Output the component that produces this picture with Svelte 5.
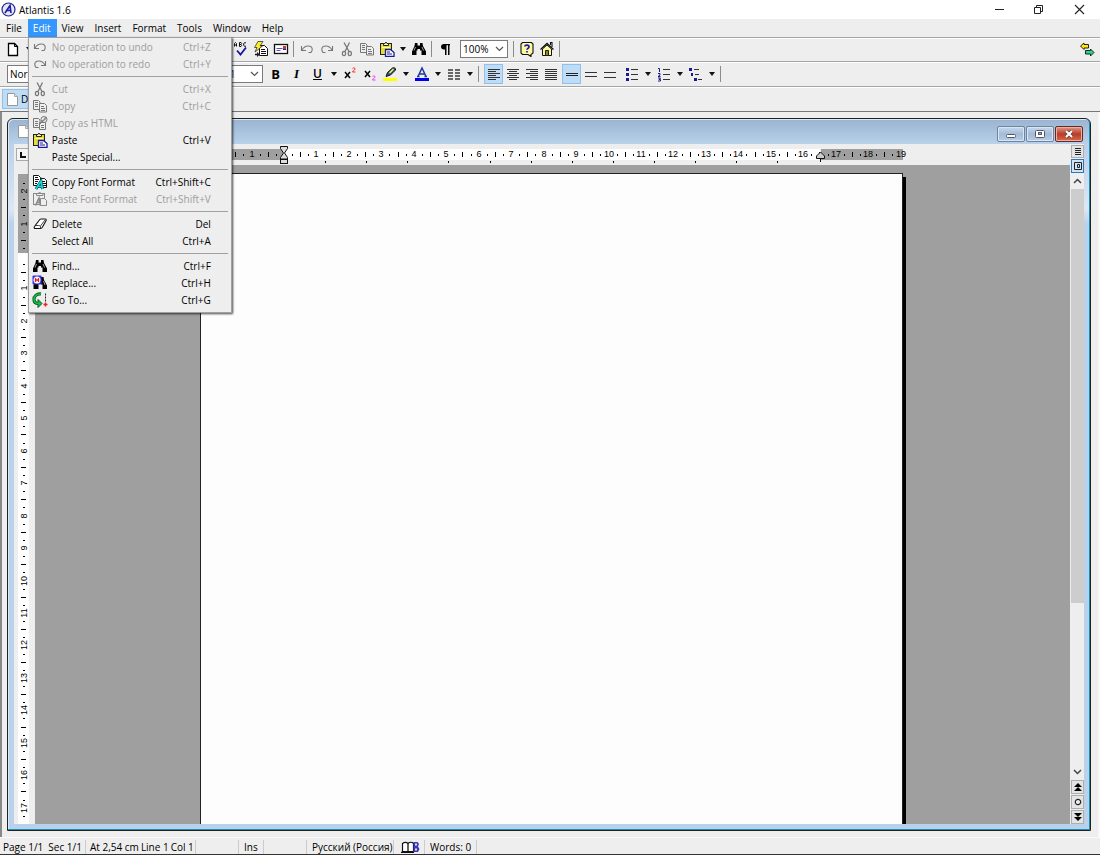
<script lang="ts">
  type MenuEntry = {
    label: string;
    keys?: string;
    icon?: string;
    disabled?: boolean;
  };

  const menus = ["File", "Edit", "View", "Insert", "Format", "Tools", "Window", "Help"];

  const editMenu: MenuEntry[][] = [
    [
      { label: "No operation to undo", keys: "Ctrl+Z", icon: "undo", disabled: true },
      { label: "No operation to redo", keys: "Ctrl+Y", icon: "redo", disabled: true },
    ],
    [
      { label: "Cut", keys: "Ctrl+X", icon: "cut", disabled: true },
      { label: "Copy", keys: "Ctrl+C", icon: "copy", disabled: true },
      { label: "Copy as HTML", icon: "copyHtml", disabled: true },
      { label: "Paste", keys: "Ctrl+V", icon: "paste" },
      { label: "Paste Special..." },
    ],
    [
      { label: "Copy Font Format", keys: "Ctrl+Shift+C", icon: "copyFormat" },
      { label: "Paste Font Format", keys: "Ctrl+Shift+V", icon: "pasteFormat", disabled: true },
    ],
    [
      { label: "Delete", keys: "Del", icon: "eraser" },
      { label: "Select All", keys: "Ctrl+A" },
    ],
    [
      { label: "Find...", keys: "Ctrl+F", icon: "find" },
      { label: "Replace...", keys: "Ctrl+H", icon: "replace" },
      { label: "Go To...", keys: "Ctrl+G", icon: "goto" },
    ],
  ];

  let openMenu = $state("Edit");
  let align = $state("alignLeft");
  let spacing = $state("spaceSingle");
  let canvasHeight = $state(600);

  const CM = 32.45;

  // quarter-centimetre marks between two positions, zero sits at `origin`
  function marks(from: number, to: number, origin: number) {
    const out: { pos: number; kind: string; label: string }[] = [];
    const first = Math.ceil(((from - origin) / CM) * 4);
    const last = Math.floor(((to - origin) / CM) * 4);
    for (let i = first; i <= last; i++) {
      if (i === 0) continue;
      const kind = i % 4 === 0 ? "number" : i % 2 === 0 ? "bar" : "dot";
      out.push({
        pos: Math.round(origin + (i * CM) / 4),
        kind,
        label: String(Math.abs(i / 4)),
      });
    }
    return out;
  }

  const hMarks = marks(4, 702, 83);
  const vMarks = $derived(marks(14, canvasHeight - 7, 91));
  const tabStops = Array.from({ length: 12 }, (_, i) => Math.round(83 + (i + 1) * 41.1));
</script>

{#snippet icon(name: string)}
  <svg class="icon" width="16" height="16" viewBox="0 0 16 16" fill="none" aria-hidden="true">
    {#if name === "new"}
      <path d="M3.5 2.5h6l3 3v9h-9z" fill="#fff" stroke="#000" stroke-width="1.3" />
      <path d="M9.5 2.5v3h3" stroke="#000" />
    {:else if name === "spell"}
      <path
        d="M1.500 5.500v-3l1-1 1 1v3M1.500 4h2M6.500 1.500v4H8l.7-1L8 3.500H6.500 8l.7-1-.7-1zM13 2l-1-.5-1.300 1v2l1.300 1 1-.5"
        stroke="#111"
      />
      <path d="M4 9.500l3.500 4L13 6.500" stroke="#15159c" stroke-width="1.800" />
    {:else if name === "autocorrect"}
      <path d="M6.500 4.500h5l3 3v7h-8z" fill="#fff" stroke="#111" />
      <path d="M8 8.500h4M8 10.500h5M8 12.500h5" stroke="#111" />
      <path d="M5 .5h5L7 5h2.500L2 11l2-4.500H1.500z" fill="#ffee2a" stroke="#333" stroke-width=".8" />
      <path d="M2 13.500h3" stroke="#111" stroke-width="1.500" />
      <path d="M4 11l3 2.500L4 16z" fill="#222" />
    {:else if name === "mail"}
      <rect x="1.500" y="3.500" width="13" height="9" fill="#fff" stroke="#111" stroke-width="1.300" />
      <path d="M3.500 7.500h6M3.500 9.500h4" stroke="#5555c0" />
      <rect x="10" y="5" width="3" height="3" fill="#c33" />
      <path d="M10 8.500h3" stroke="#1a1ad0" />
    {:else if name === "undo"}
      <path d="M2.500 5v4.500H7M3 9c2-3.500 5-4.500 8-3.800 2.500.7 3 3.500 1 6.300H9.500" stroke="#777" stroke-width="1.100" />
    {:else if name === "redo"}
      <path d="M13.500 5v4.500H9M13 9c-2-3.500-5-4.500-8-3.800-2.500.7-3 3.500-1 6.300h2.500" stroke="#777" stroke-width="1.100" />
    {:else if name === "cut"}
      <path d="M5 1.500l5 9M10.500 1.500l-4.500 9" stroke="#777" stroke-width="1.300" />
      <ellipse cx="5" cy="12.500" rx="1.600" ry="2.200" stroke="#777" stroke-width="1.200" />
      <ellipse cx="10.800" cy="12.500" rx="1.600" ry="2.200" stroke="#777" stroke-width="1.200" />
    {:else if name === "copy"}
      <g stroke="#777">
        <path d="M1.500 2.500h5l1.500 1.500v7.500H1.500z" />
        <path d="M3 4.500h3M3 6.500h3M3 8.500h3" />
        <path d="M7.500 5.500h5l2 2v6.500h-7z" fill="#eee" />
        <path d="M9 8.500h3M9 10.500h4M9 12.500h4" />
      </g>
    {:else if name === "copyHtml"}
      <g stroke="#777">
        <path d="M1.500 3.500h5l1.500 1.500v7.500H1.500z" />
        <path d="M3 6.500h3M3 8.500h3M3 10.500h3" />
        <path d="M7.500 7.500h6v7h-6z" fill="#eee" />
        <path d="M9 10.500h3M9 12.500h3" />
        <circle cx="12" cy="4.500" r="3" fill="#eee" />
        <path d="M10 6c2 0 4-1.500 4-4M8 9l6-7" />
      </g>
    {:else if name === "paste"}
      <rect x="1.500" y="2.500" width="11" height="11" fill="#e5dd35" stroke="#222" />
      <path d="M4.500 4.500v-2h1.500l1-1.500 1 1.500h1.500v2z" fill="#fdfbb0" stroke="#222" />
      <path d="M3 6.500h8" stroke="#fdfbb0" />
      <path d="M6.500 8.500h5l3.500 3v4H6.500z" fill="#fff" stroke="#1a1a9a" stroke-width="1.300" />
      <path d="M8 11h3M8 13h5" stroke="#1a1a9a" />
    {:else if name === "copyFormat"}
      <g stroke="#111">
        <path d="M1.500 1.500h5l2 2v8h-7z" fill="#fff" />
        <path d="M3 3.500h3M3 5.500h4M3 7.500h3M3 9.500h2" />
        <path d="M8.500 4.500h4l2 2v7h-6z" fill="#fff" />
        <path d="M10 7.500h3M10 9.500h4M11 11.500h3" />
      </g>
      <path d="M4 15L9 7l1.500 8M6.500 12.500h4" stroke="#044" stroke-width="2.800" />
      <path d="M4 15L9 7l1.500 8M6.500 12.500h4" stroke="#19d6dc" stroke-width="1.600" />
    {:else if name === "pasteFormat"}
      <g stroke="#888">
        <rect x="1.500" y="2.500" width="11" height="11" />
        <path d="M4.500 4.500v-2h2l1-1.500 1.500 1.500h2v2z" />
        <path d="M8.500 7.500h4l2 2v5h-6z" fill="#eee" />
        <path d="M3.500 14.500L7 7l1.500 7.500M5 11.500h4" stroke-width="1.500" />
      </g>
    {:else if name === "eraser"}
      <path
        d="M7 4.500c.6-1 1-1.500 2-1.500h4c1.200 0 1.500.8 1 1.800L10.500 11c-.5.9-1 1.500-2 1.500H3.500c-1.200 0-1.800-1-1-2z"
        fill="#fff"
        stroke="#111"
        stroke-width="1.100"
      />
      <path d="M3.500 9.500h3.200c1.500 0 2 .8 1.800 2.500M8.500 10l4.500-6" stroke="#111" stroke-width=".8" />
    {:else if name === "find"}
      <path d="M4 2h2.500v2.500H9V2h2.500l.5 3 3 5.500V14h-4.500v-4.500H9V8H6.500v1.500H5.500V14H1v-3.500L3.500 5z" fill="#000" />
      <path d="M4.500 6L3 9.500M11 6l1.500 3.500" stroke="#ccc" stroke-width=".8" />
    {:else if name === "replace"}
      <path d="M5 2h2.500v2.500H9V2h2.500l.5 3 3 5.500V14h-4.500v-4.500H9V8H6.500v6H1.500v-4z" fill="#000" />
      <rect x=".5" y=".5" width="9" height="9" rx="1" fill="#3434e0" />
      <circle cx="5" cy="5" r="3.500" fill="#fff" />
      <path d="M3.500 3v4M6.500 3v4M3.500 5h3" stroke="#e02020" stroke-width="1.300" />
      <path d="M11.500 6l1.500 4" stroke="#ccc" stroke-width=".8" />
    {:else if name === "goto"}
      <path
        d="M9 2C4.500 1.500 2 4.500 2 7.200c0 2.800 1.500 4.300 4.500 4.300"
        stroke="#053"
        stroke-width="3.200"
      />
      <path d="M6 7.500l4 4-4 4z" fill="#1dbf38" stroke="#053" />
      <path d="M9 2C4.500 1.500 2 4.500 2 7.200c0 2.800 1.500 4.300 5 4.300" stroke="#1dbf38" stroke-width="1.600" />
      <path d="M13.500 1.500v8" stroke="#222" stroke-dasharray="2 1" />
      <path d="M11.500 12.500h4M13.500 10.500v4" stroke="#e22" stroke-width="1.500" />
    {:else if name === "pilcrow"}
      <path d="M13 3H7C3 3 3 8.500 7 8.500h1V14h1.500V4.300H11V14h1.500V4.300h.5z" fill="#000" />
    {:else if name === "help"}
      <path d="M3.500 1.500h9l1.500 1.500v9l-2 1.500V15.500l-3-2H3.500L2 12V3z" fill="#fdf9a0" stroke="#111" stroke-width="1.100" />
      <path d="M5.800 5.500C6 3.500 10 3.500 10 5.800c0 1.500-2 1.600-2 3M8 10v1.500" stroke="#1a1aa8" stroke-width="1.700" />
    {:else if name === "home"}
      <path d="M11.500 4V1.500H13V6" stroke="#111" stroke-width="1.100" />
      <path d="M3.500 8L8 4l4.500 4v6.500h-9z" fill="#fdf9a0" stroke="#111" />
      <path d="M1.500 8.500L8 2.500l6.500 6" stroke="#111" stroke-width="1.300" />
      <path d="M6.500 14.500v-5h3v5z" fill="#8d8a1e" stroke="#222" />
    {:else if name === "swap"}
      <path d="M1.500 5L5 2v1.500h4.500V7H5v1.500z" fill="#ffea00" stroke="#222" />
      <path d="M15 11.500L11.500 8v1.500H6.500V13h5v2z" fill="#1fdc8c" stroke="#222" />
    {:else if name === "super"}
      <path d="M3 6l5 6M8 6l-5 6" stroke="#000" stroke-width="1.500" />
      <path d="M10.500 2.500c1-1 2.500-1 2.500.5s-2.500 1.500-2.500 3h3" stroke="#f33" />
    {:else if name === "sub"}
      <path d="M3 5l5 6M8 5l-5 6" stroke="#000" stroke-width="1.500" />
      <path d="M10.500 10.500c1-1 2.500-1 2.500.5s-2.500 1.500-2.500 3h3" stroke="#f3f" />
    {:else if name === "highlight"}
      <rect x="1" y="12" width="14" height="3" fill="#ffff00" />
      <path d="M4 10.500l1.500-4 5-4.500c2-.8 3.500.5 3 2L8.500 9z" fill="#335a77" stroke="#111" />
      <path d="M7.500 7l4-4" stroke="#ffff50" stroke-width="1.300" />
    {:else if name === "fontColor"}
      <rect x="1" y="12" width="14" height="3" fill="#0000f0" />
      <path d="M4 10.500L8 2l4 8.500M5.500 8h5M3 10.500h2.500M10.500 10.500H13" stroke="#1c3a9c" stroke-width="1.500" />
    {:else if name === "columns"}
      <path
        d="M2 4h5M2 7h5M2 10h5M2 13h5M9 4h5M9 7h5M9 10h5M9 13h5"
        stroke="#666"
        stroke-width="2"
      />
    {:else if name === "alignLeft"}
      <path d="M2 3.500h12M2 5.500h8M2 7.500h12M2 9.500h8M2 11.500h12M2 13.500h8" stroke="#333" />
    {:else if name === "alignCenter"}
      <path d="M2 3.500h12M4 5.500h8M2 7.500h12M4 9.500h8M2 11.500h12M4 13.500h8" stroke="#333" />
    {:else if name === "alignRight"}
      <path d="M2 3.500h12M6 5.500h8M2 7.500h12M6 9.500h8M2 11.500h12M6 13.500h8" stroke="#333" />
    {:else if name === "justify"}
      <path d="M2 3.500h12M2 5.500h12M2 7.500h12M2 9.500h12M2 11.500h12M2 13.500h12" stroke="#333" />
    {:else if name === "spaceSingle"}
      <path d="M2 7.500h12M2 9.500h12" stroke="#222" />
    {:else if name === "spaceHalf"}
      <path d="M2 6.500h12M2 10.500h12" stroke="#333" />
    {:else if name === "spaceDouble"}
      <path d="M2 6.500h12M2 11.500h12" stroke="#333" />
    {:else if name === "bullets"}
      <path d="M2 2h3v3H2zM2 7h3v3H2zM2 12h3v3H2z" fill="#1a1a90" />
      <path d="M7 3.500h7M7 8.500h7M7 13.500h7" stroke="#333" />
    {:else if name === "numbers"}
      <path d="M2 2.500h1.500V6M2 7.500h2v1.500l-2 1.500h2.500M2 12h2.500L3 13.500h1.500v1.500H2" stroke="#1a1a90" />
      <path d="M7 3.500h7M7 8.500h7M7 13.500h7" stroke="#333" />
    {:else if name === "outline"}
      <path d="M1 2h3v3H1zM3 7h2v3H3zM6 12h3v3H6z" fill="#1a1a90" />
      <path d="M6 3.500h5M7 8.500h4M10 13.500h4" stroke="#333" />
    {/if}
  </svg>
{/snippet}

{#snippet tool(name: string, label: string, disabled = false)}
  <button class="tool" title={label} aria-label={label} {disabled}>{@render icon(name)}</button>
{/snippet}

{#snippet drop(label: string)}
  <button class="drop" aria-label={label}>
    <svg width="6" height="4" viewBox="0 0 6 4"><path d="M0 0h6L3 4z" fill="#111" /></svg>
  </button>
{/snippet}

{#snippet chevron()}
  <svg class="chevron" width="9" height="6" viewBox="0 0 9 6" fill="none">
    <path d="M1 1l3.500 3.500L8 1" stroke="#555" stroke-width="1.200" />
  </svg>
{/snippet}

{#snippet sheet()}
  <svg width="11" height="13" viewBox="0 0 11 13">
    <path d="M.5.5h7l3 3v9H.5z" fill="#fff" stroke="#999" />
    <path d="M7.500.5v3h3" fill="#ddd" stroke="#aaa" />
  </svg>
{/snippet}

<div class="app">
  <header class="titlebar">
    <svg width="15" height="15" viewBox="0 0 15 15">
      <circle cx="7.500" cy="7.500" r="6.500" fill="#e4e6fa" stroke="#23238c" stroke-width="1.200" />
      <path d="M4 11L9 3.500l1 7.500M6 8.500h4" fill="none" stroke="#1c1ca0" stroke-width="1.600" />
    </svg>
    <h1>Atlantis 1.6</h1>
    <div class="caption">
      <button aria-label="Minimize">
        <svg width="11" height="11"><path d="M1 5.500h9" stroke="#222" /></svg>
      </button>
      <button aria-label="Restore">
        <svg width="11" height="11" fill="none" stroke="#222">
          <path d="M1.500 3.500h6v6h-6zM3.500 3.500v-2h6v6h-2" />
        </svg>
      </button>
      <button aria-label="Close">
        <svg width="11" height="11"><path d="M1 1l9 9M10 1l-9 9" stroke="#222" stroke-width="1.100" /></svg>
      </button>
    </div>
  </header>

  <nav class="menubar">
    {#each menus as name}
      <div class="menu-slot">
        <button
          class="menu-title"
          class:open={openMenu === name}
          onclick={() => (openMenu = openMenu === name ? "" : name)}>{name}</button
        >
        {#if name === "Edit" && openMenu === name}
          <div class="menu" role="menu">
            {#each editMenu as section}
              <div class="menu-section">
                {#each section as entry}
                  <button class="menu-item" role="menuitem" disabled={entry.disabled}>
                    <span class="menu-icon">
                      {#if entry.icon}{@render icon(entry.icon)}{/if}
                    </span>
                    <span class="menu-label">{entry.label}</span>
                    <span>{entry.keys ?? ""}</span>
                  </button>
                {/each}
              </div>
            {/each}
          </div>
        {/if}
      </div>
    {/each}
  </nav>

  <div class="toolbar standard">
    {@render tool("new", "New")}
    {@render drop("New from template")}
    <div class="tools">
      {@render tool("spell", "Spelling")}
      {@render tool("autocorrect", "AutoCorrect")}
      {@render tool("mail", "Send")}
      <i class="sep"></i>
      {@render tool("undo", "Undo", true)}
      {@render tool("redo", "Redo", true)}
      {@render tool("cut", "Cut", true)}
      {@render tool("copy", "Copy", true)}
      {@render tool("paste", "Paste")}
      {@render drop("Paste options")}
      {@render tool("find", "Find")}
      <i class="sep"></i>
      {@render tool("pilcrow", "Special symbols")}
      <span class="combo zoom">
        <select aria-label="Zoom"><option>100%</option></select>
        {@render chevron()}
      </span>
      <i class="sep"></i>
      {@render tool("help", "Help")}
      {@render tool("home", "Home page")}
      <i class="sep"></i>
    </div>
    <div class="far">{@render tool("swap", "Switch toolbars")}</div>
  </div>

  <div class="toolbar formatting">
    <span class="combo style">
      <select aria-label="Style"><option>Normal</option></select>
      {@render chevron()}
    </span>
    <span class="combo size">
      <select aria-label="Font size"><option>11</option></select>
      {@render chevron()}
    </span>
    <button class="tool letter">B</button>
    <button class="tool letter italic">I</button>
    <button class="tool letter underline">U</button>
    {@render drop("Underline style")}
    {@render tool("super", "Superscript")}
    {@render tool("sub", "Subscript")}
    {@render tool("highlight", "Highlight")}
    {@render drop("Highlight color")}
    {@render tool("fontColor", "Font color")}
    {@render drop("Pick font color")}
    {@render tool("columns", "Columns")}
    {@render drop("Column count")}
    <i class="sep"></i>
    <div class="group">
      {#each ["alignLeft", "alignCenter", "alignRight", "justify"] as name}
        <button class="tool" class:on={align === name} aria-label={name} onclick={() => (align = name)}>
          {@render icon(name)}
        </button>
      {/each}
    </div>
    <div class="group">
      {#each ["spaceSingle", "spaceHalf", "spaceDouble"] as name}
        <button class="tool" class:on={spacing === name} aria-label={name} onclick={() => (spacing = name)}>
          {@render icon(name)}
        </button>
      {/each}
    </div>
    <div class="lists">
      {@render tool("bullets", "Bullets")}
      {@render drop("Bullet style")}
      {@render tool("numbers", "Numbering")}
      {@render drop("Numbering style")}
      {@render tool("outline", "Outline")}
      {@render drop("Outline style")}
    </div>
    <i class="sep"></i>
  </div>

  <div class="doc-tabs">
    <button class="doc-tab">{@render sheet()}Doc 1</button>
  </div>

  <main class="workspace">
    <section class="window">
      <div class="window-title">
        {@render sheet()}
        <div class="window-buttons">
          <button aria-label="Minimize document">
            <svg width="12" height="10">
              <rect x="1.500" y="5.500" width="9" height="3" rx="1" fill="#fff" stroke="#556" />
            </svg>
          </button>
          <button aria-label="Maximize document">
            <svg width="12" height="10" fill="#fff" stroke="#556">
              <rect x="1.500" y="1.500" width="9" height="7" rx="1" />
              <rect x="4.500" y="3.500" width="3" height="2" fill="#9bb" />
            </svg>
          </button>
          <button class="close" aria-label="Close document">
            <svg width="12" height="10">
              <path d="M3 2l6 6M9 2L3 8" stroke="#643" stroke-width="3.500" />
              <path d="M3 2l6 6M9 2L3 8" stroke="#fff" stroke-width="2" />
            </svg>
          </button>
        </div>
      </div>

      <div class="editor">
        <div class="ruler-row">
          <button class="tab-kind" aria-label="Tab type">
            <svg width="7" height="6"><path d="M1 0v5h5" fill="none" stroke="#111" stroke-width="2" /></svg>
          </button>
          <svg class="h-ruler" width="708" height="21">
            <rect x="0" y="5" width="83" height="11" fill="#9f9f9f" />
            <rect x="83" y="5" width="536" height="11" fill="#fff" />
            <rect x="620" y="5" width="82" height="11" fill="#9f9f9f" />
            {#each hMarks as mark}
              {#if mark.kind === "number"}
                <text x={mark.pos} y="13">{mark.label}</text>
              {:else if mark.kind === "bar"}
                <rect x={mark.pos} y="8" width="1" height="5" />
              {:else}
                <rect x={mark.pos} y="10" width="1" height="2" />
              {/if}
            {/each}
            {#each tabStops as stop}
              <rect x={stop} y="17" width="1" height="2" />
            {/each}
            <g fill="#ddd" stroke="#111">
              <path d="M79.500 2.500h7v2l-3 4.500 3 4.500v1.500h-7v-1.500l3-4.500-3-4.500z" />
              <rect x="79.500" y="15.500" width="7" height="4" />
              <path d="M615.500 14.500v-2.500l4-4 4 4v2.500z" fill="#ccc" />
              <path d="M619.500 15v3" />
            </g>
          </svg>
          <button class="view-button" aria-label="Draft view">
            <svg width="8" height="9">
              <path d="M1 1.500h6M1 3.500h6M1 5.500h6M1 7.500h6" stroke="#222" />
            </svg>
          </button>
        </div>

        <svg class="v-ruler" width="21">
          <rect x="4" y="9" width="11" height="79" fill="#9f9f9f" />
          <rect x="4" y="88" width="11" height="100%" fill="#fff" />
          {#each vMarks as mark}
            {#if mark.kind === "number"}
              <text transform="translate(13 {mark.pos}) rotate(-90)">{mark.label}</text>
            {:else if mark.kind === "bar"}
              <rect x="7" y={mark.pos} width="5" height="1" />
            {:else}
              <rect x="9" y={mark.pos} width="2" height="1" />
            {/if}
          {/each}
        </svg>

        <div class="canvas" bind:clientHeight={canvasHeight}>
          <div class="page" contenteditable="true" role="textbox" aria-label="Page" tabindex="0"></div>
        </div>

        <div class="scroll">
          <button class="view-button on" aria-label="Print layout">
            <svg width="8" height="8" fill="none" stroke="#222">
              <path d="M.5.500h7v7h-7zM3.500 2.500h2v3h-2z" />
            </svg>
          </button>
          <button class="arrow" aria-label="Scroll up">
            <svg width="9" height="6"><path d="M1 5l3.500-3.500L8 5" fill="none" stroke="#444" stroke-width="1.500" /></svg>
          </button>
          <div class="track"><div class="thumb"></div></div>
          <button class="arrow" aria-label="Scroll down">
            <svg width="9" height="6"><path d="M1 1l3.500 3.500L8 1" fill="none" stroke="#444" stroke-width="1.500" /></svg>
          </button>
          <button class="jump" aria-label="Previous page">
            <svg width="8" height="8"><path d="M4 0l4 4H0zM4 4l4 4H0z" /></svg>
          </button>
          <button class="jump" aria-label="Browse by">
            <svg width="8" height="8"><circle cx="4" cy="4" r="2.700" fill="#eee" stroke="#222" stroke-width="1.200" /></svg>
          </button>
          <button class="jump" aria-label="Next page">
            <svg width="8" height="8"><path d="M0 0h8L4 4zM0 4h8L4 8z" /></svg>
          </button>
        </div>
      </div>
    </section>
  </main>

  <footer class="status">
    <span class="cell place"><span>Page 1/1</span><span>Sec 1/1</span></span>
    <span class="cell caret"><span>At 2,54 cm</span><span>Line 1</span><span>Col 1</span></span>
    <span class="cell blank"></span>
    <span class="cell mode">Ins</span>
    <span class="cell blank"></span>
    <span class="cell language">Русский (Россия)</span>
    <span class="cell book">
      <svg width="19" height="12" viewBox="0 0 19 12">
        <path
          d="M1.500 2.500c2-1.500 4-1.500 5.500 0 1.500-1.500 4-1.500 5.500 0v8h-11z"
          fill="#fff"
          stroke="#111"
          stroke-width="1.200"
        />
        <path d="M7 2.500v8M0 11.300h13" stroke="#111" stroke-width="1.300" />
        <path d="M12.500 1h4L18 3l-1 2.500L18.500 8 17 11h-4.500z" fill="#3434d8" />
        <path d="M14 2.500h2v2h-2zM14 7.500h2v2h-2z" fill="#ffe94a" />
      </svg>
    </span>
    <span class="cell words">Words: 0</span>
  </footer>
</div>

<style>
  :global(body) {
    margin: 0;
    background: #eee;
  }

  .app {
    display: flex;
    flex-direction: column;
    height: 100vh;
    box-sizing: border-box;
    border-bottom: 1px solid #333;
    background: #eee;
    color: #000;
    font: 10px/16px "Open Sans", "Noto Sans", sans-serif;
  }

  button,
  select {
    font: inherit;
    color: inherit;
    margin: 0;
    padding: 0;
    border: none;
    background: none;
  }

  svg {
    display: block;
    flex-shrink: 0;
  }

  .titlebar {
    display: flex;
    align-items: center;
    gap: 3px;
    height: 19px;
    padding-left: 1px;
    background: #fff;
  }

  h1 {
    margin: 0;
    font-size: 10px;
    font-weight: 400;
  }

  .caption {
    display: flex;
    margin-left: auto;
  }

  .caption button {
    display: flex;
    align-items: center;
    justify-content: center;
    width: 39px;
    height: 18px;
  }

  .caption button:last-child {
    width: 42px;
  }

  .menubar {
    display: flex;
    height: 18px;
    padding-left: 1px;
    border-bottom: 1px solid #a5a5a5;
  }

  .menu-slot {
    position: relative;
  }

  .menu-title {
    height: 18px;
    padding: 0 6px 0 5px;
  }

  .menu-title.open {
    background: #3397fd;
    color: #fff;
  }

  .menu {
    position: absolute;
    z-index: 2;
    top: 18px;
    left: 0;
    width: 204px;
    padding: 0 3px 4px;
    border: 1px solid #a0a0a0;
    background: #eee;
    box-shadow: 1px 1px 2px rgba(0, 0, 0, 0.7);
    box-sizing: border-box;
  }

  .menu-section + .menu-section {
    margin-top: 4px;
    padding-top: 3px;
    border-top: 1px solid #a0a0a0;
  }

  .menu-item {
    display: flex;
    align-items: center;
    width: 100%;
    height: 17px;
    padding-right: 17px;
    text-align: left;
    white-space: nowrap;
  }

  .menu-item:disabled {
    color: #9d9d9d;
  }

  .menu-icon {
    width: 20px;
  }

  .menu-label {
    flex: 1;
  }

  .toolbar {
    display: flex;
    align-items: center;
    height: 24px;
    padding-bottom: 2px;
    box-sizing: border-box;
    border-top: 1px solid #fff;
    border-bottom: 1px solid #a5a5a5;
  }

  .standard {
    padding-left: 3px;
    padding-right: 3px;
  }

  .formatting {
    height: 25px;
    padding-left: 7px;
  }

  .tools {
    display: flex;
    align-items: center;
    margin-left: 196px;
  }

  .far {
    margin-left: auto;
  }

  .tool,
  .drop {
    display: flex;
    align-items: center;
    justify-content: center;
    width: 20px;
    height: 20px;
    flex-shrink: 0;
    box-sizing: border-box;
  }

  .drop {
    width: 12px;
  }

  .group {
    display: flex;
    margin-left: 2px;
  }

  .group .tool {
    width: 19px;
  }

  .lists {
    display: flex;
    margin-left: 3px;
  }

  .tool.on {
    border: 1px solid #90c0ec;
    background: #bedcf5;
  }

  .letter {
    width: 21px;
    font-size: 13px;
    font-weight: 700;
  }

  .italic {
    font-family: "Liberation Serif", serif;
    font-style: italic;
  }

  .underline {
    font-size: 12px;
    font-weight: 600;
    text-decoration: underline;
  }

  .sep {
    width: 1px;
    height: 16px;
    margin: 0 3px 0 2px;
    background: #8c8c8c;
  }

  .combo {
    position: relative;
    display: flex;
    height: 18px;
    box-sizing: border-box;
    border: 1px solid #7a7a7a;
    background: #fff;
  }

  .combo select {
    width: 100%;
    padding-left: 2px;
    appearance: none;
  }

  .combo .chevron {
    position: absolute;
    right: 3px;
    top: 5px;
    pointer-events: none;
  }

  .zoom {
    width: 48px;
    margin: 0 3px 0 5px;
  }

  .style {
    width: 200px;
  }

  .size {
    width: 42px;
    margin: 0 2px 0 14px;
    color: #1a3a80;
  }

  .doc-tabs {
    display: flex;
    height: 25px;
    padding: 1px 2px 0;
    box-sizing: border-box;
    border-top: 1px solid #fff;
    border-bottom: 1px solid #777;
  }

  .doc-tab {
    display: flex;
    align-items: center;
    gap: 3px;
    height: 20px;
    padding: 0 4px;
    border: 1px solid #90c0ec;
    background: #bedcf5;
    box-sizing: border-box;
  }

  .workspace {
    display: flex;
    flex: 1;
    min-height: 0;
    padding: 6px 7px 6px 5px;
    border-left: 2px solid #888;
    border-right: 2px solid #f8f8f8;
  }

  .window {
    display: flex;
    flex-direction: column;
    flex: 1;
    min-width: 0;
    padding: 0 6px 6px;
    border: 1px solid #222;
    border-radius: 6px 6px 0 0;
    background: linear-gradient(#99b4d1, #b9d1ea 25px, #dbe7f5 90px, #b9d1ea 105px);
    box-shadow: inset -1px -1px #1b8fb0, inset 1px 1px #dbe7f5;
  }

  .window-title {
    display: flex;
    align-items: center;
    height: 25px;
    padding-left: 4px;
    flex-shrink: 0;
  }

  .window-buttons {
    display: flex;
    gap: 1px;
    margin: 5px 1px 0 auto;
  }

  .window-buttons button {
    display: flex;
    align-items: center;
    justify-content: center;
    width: 28px;
    height: 16px;
    border: 1px solid #6d839f;
    border-radius: 2px;
    background: linear-gradient(#c8d9ec, #a3bbd8 50%, #b7cce4);
    box-shadow: inset 0 0 0 1px #dae6f3;
    box-sizing: border-box;
  }

  .window-buttons .close {
    border-color: #6b2822;
    background: linear-gradient(#dd9a8c, #bb3b27 50%, #d36a50);
    box-shadow: inset 0 0 0 1px #e6b0a5;
  }

  .editor {
    display: grid;
    grid-template-columns: 21px minmax(0, 1fr) 14px;
    grid-template-rows: 21px minmax(0, 1fr);
    flex: 1;
    min-height: 0;
    background: #eee;
  }

  .ruler-row {
    display: grid;
    grid-template-columns: subgrid;
    grid-column: 1 / -1;
  }

  .tab-kind {
    display: flex;
    align-items: center;
    justify-content: center;
    width: 14px;
    height: 13px;
    margin: 4px 0 0 2px;
    border: 1px solid #aaa;
    background: #f6f6f6;
    box-sizing: border-box;
  }

  .h-ruler {
    justify-self: center;
    padding-left: 5px;
  }

  .h-ruler text,
  .v-ruler text {
    font: 9px "Liberation Sans", Arial, sans-serif;
    text-anchor: middle;
  }

  .v-ruler {
    height: 100%;
    overflow: hidden;
  }

  .canvas {
    display: flex;
    justify-content: center;
    padding: 8px 2px 0 0;
    background: #9f9f9f;
    overflow: hidden;
  }

  .page {
    width: 703px;
    border: 1px solid #222;
    border-bottom: none;
    background: #fdfdfd;
    box-shadow: 3px 4px #000;
    box-sizing: border-box;
    outline: none;
  }

  .scroll {
    display: flex;
    flex-direction: column;
    min-height: 0;
    margin-top: -6px;
    padding-left: 1px;
    gap: 1px;
  }

  .view-button,
  .jump,
  .arrow {
    display: flex;
    align-items: center;
    justify-content: center;
    width: 13px;
    height: 14px;
    flex-shrink: 0;
    box-sizing: border-box;
  }

  .view-button,
  .jump {
    border: 1px solid #adadad;
    background: #e4e4e4;
  }

  .ruler-row .view-button {
    height: 13px;
    margin: 1px 0 0 1px;
  }

  .view-button.on {
    border-color: #2f78b8;
    background: #cfe4f7;
  }

  .track {
    flex: 1;
    min-height: 0;
    background: #eee;
  }

  .thumb {
    height: 72%;
    background: #cdcdcd;
  }

  .status {
    display: flex;
    align-items: center;
    height: 17px;
    padding-top: 1px;
    border-top: 1px solid #fafafa;
    box-sizing: border-box;
    white-space: nowrap;
  }

  .cell {
    display: flex;
    align-items: center;
    height: 14px;
    padding-left: 5px;
    border-right: 1px solid #ccc;
    box-sizing: border-box;
  }

  .place {
    width: 86px;
    gap: 5px;
    padding-left: 3px;
  }

  .caret {
    width: 110px;
    gap: 2px;
    padding-left: 4px;
  }

  .blank {
    width: 43px;
  }

  .mode {
    width: 25px;
  }

  .language {
    width: 87px;
  }

  .book {
    width: 31px;
    padding-left: 7px;
  }

  .words {
    width: 52px;
  }
</style>
